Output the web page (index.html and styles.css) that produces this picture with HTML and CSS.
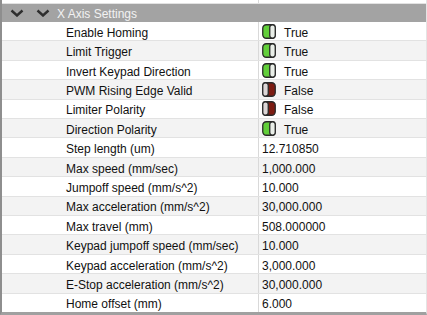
FILE: index.html
```html
<!DOCTYPE html>
<html lang="en">
<head>
    <meta charset="UTF-8">
    <title>X Axis Settings</title>
    <link rel="stylesheet" href="styles.css">
</head>
<body>
    <div class="panel">
        <div class="row partial">
            <div class="name"></div>
            <div class="value"></div>
        </div>

        <div class="group-header">
            <svg class="chevron" viewBox="0 0 14 8"><polyline points="1.5 1.5 7 6.5 12.5 1.5"></polyline></svg>
            <svg class="chevron" viewBox="0 0 14 8"><polyline points="1.5 1.5 7 6.5 12.5 1.5"></polyline></svg>
            <span class="group-title">X Axis Settings</span>
        </div>

        <div class="rows">
            <div class="row">
                <div class="name">Enable Homing</div>
                <div class="value">
                    <svg class="toggle on" viewBox="0 0 14 15"><rect class="track" x="0.75" y="0.75" width="12.5" height="13.5" rx="3.5"></rect><rect class="knob" x="7.75" y="0.75" width="5.5" height="13.5" rx="2.75"></rect></svg>
                    True
                </div>
            </div>
            <div class="row">
                <div class="name">Limit Trigger</div>
                <div class="value">
                    <svg class="toggle on" viewBox="0 0 14 15"><rect class="track" x="0.75" y="0.75" width="12.5" height="13.5" rx="3.5"></rect><rect class="knob" x="7.75" y="0.75" width="5.5" height="13.5" rx="2.75"></rect></svg>
                    True
                </div>
            </div>
            <div class="row">
                <div class="name">Invert Keypad Direction</div>
                <div class="value">
                    <svg class="toggle on" viewBox="0 0 14 15"><rect class="track" x="0.75" y="0.75" width="12.5" height="13.5" rx="3.5"></rect><rect class="knob" x="7.75" y="0.75" width="5.5" height="13.5" rx="2.75"></rect></svg>
                    True
                </div>
            </div>
            <div class="row">
                <div class="name">PWM Rising Edge Valid</div>
                <div class="value">
                    <svg class="toggle off" viewBox="0 0 14 15"><rect class="track" x="0.75" y="0.75" width="12.5" height="13.5" rx="3.5"></rect><rect class="knob" x="0.75" y="0.75" width="5.5" height="13.5" rx="2.75"></rect></svg>
                    False
                </div>
            </div>
            <div class="row">
                <div class="name">Limiter Polarity</div>
                <div class="value">
                    <svg class="toggle off" viewBox="0 0 14 15"><rect class="track" x="0.75" y="0.75" width="12.5" height="13.5" rx="3.5"></rect><rect class="knob" x="0.75" y="0.75" width="5.5" height="13.5" rx="2.75"></rect></svg>
                    False
                </div>
            </div>
            <div class="row">
                <div class="name">Direction Polarity</div>
                <div class="value">
                    <svg class="toggle on" viewBox="0 0 14 15"><rect class="track" x="0.75" y="0.75" width="12.5" height="13.5" rx="3.5"></rect><rect class="knob" x="7.75" y="0.75" width="5.5" height="13.5" rx="2.75"></rect></svg>
                    True
                </div>
            </div>
            <div class="row">
                <div class="name">Step length (um)</div>
                <div class="value">12.710850</div>
            </div>
            <div class="row">
                <div class="name">Max speed (mm/sec)</div>
                <div class="value">1,000.000</div>
            </div>
            <div class="row">
                <div class="name">Jumpoff speed (mm/s^2)</div>
                <div class="value">10.000</div>
            </div>
            <div class="row">
                <div class="name">Max acceleration (mm/s^2)</div>
                <div class="value">30,000.000</div>
            </div>
            <div class="row">
                <div class="name">Max travel (mm)</div>
                <div class="value">508.000000</div>
            </div>
            <div class="row">
                <div class="name">Keypad jumpoff speed (mm/sec)</div>
                <div class="value">10.000</div>
            </div>
            <div class="row">
                <div class="name">Keypad acceleration (mm/s^2)</div>
                <div class="value">3,000.000</div>
            </div>
            <div class="row">
                <div class="name">E-Stop acceleration (mm/s^2)</div>
                <div class="value">30,000.000</div>
            </div>
            <div class="row">
                <div class="name">Home offset (mm)</div>
                <div class="value">6.000</div>
            </div>
        </div>
    </div>
</body>
</html>
```

FILE: styles.css
```css
/* General */
* {
    box-sizing: border-box;
    margin: 0;
    padding: 0;
}

body {
    font-family: 'Liberation Sans', Arial, sans-serif;
    font-size: 12px;
    color: #111;
    background-color: #ffffff;
    overflow: hidden;
}

/* Property panel */
.panel {
    width: 427px;
    height: 315px;
    display: flex;
    flex-direction: column;
    border-left: 2px solid #8e8e8e;
    border-bottom: 3px solid #a0a0a0;
    border-right: 1px solid #e4e4e4;
    overflow: hidden;
}

/* Group header */
.group-header {
    height: 18px;
    flex-shrink: 0;
    display: flex;
    align-items: center;
    background-color: #a3a3a3;
    padding-left: 8px;
}

.chevron {
    width: 14px;
    height: 8px;
    margin-right: 12px;
    fill: none;
    stroke: #2e2e2e;
    stroke-width: 2.4;
}

.chevron + .chevron {
    margin-right: 7px;
}

.group-title {
    color: #f2f2f2;
    padding-top: 1px;
}

/* Rows */
.rows {
    flex: 1;
    display: flex;
    flex-direction: column;
}

.row {
    flex: 1;
    display: grid;
    grid-template-columns: 256px 1fr;
    border-bottom: 1px solid #e2e2e2;
    background-color: #ffffff;
}

.rows .row:nth-child(even) {
    background-color: #f3f3f3;
}

.row.partial {
    flex: 0 0 3px;
}

.rows .row:last-child {
    border-bottom: none;
}

.name {
    display: flex;
    align-items: center;
    padding-left: 64px;
    padding-top: 3px;
    white-space: nowrap;
}

.value {
    display: flex;
    align-items: center;
    gap: 8px;
    padding-left: 3px;
    padding-top: 3px;
    border-left: 1px solid #d9d9d9;
    white-space: nowrap;
}

/* Toggle icon */
.toggle {
    width: 14px;
    height: 15px;
    flex-shrink: 0;
    margin-top: -3px;
}

.toggle .track,
.toggle .knob {
    stroke: #2a2a2a;
    stroke-width: 1.3;
}

.toggle.on .track {
    fill: #62cf3a;
}

.toggle.on .knob {
    fill: #e9eee8;
}

.toggle.off .track {
    fill: #7c1c12;
}

.toggle.off .knob {
    fill: #dcd6d6;
}
```
